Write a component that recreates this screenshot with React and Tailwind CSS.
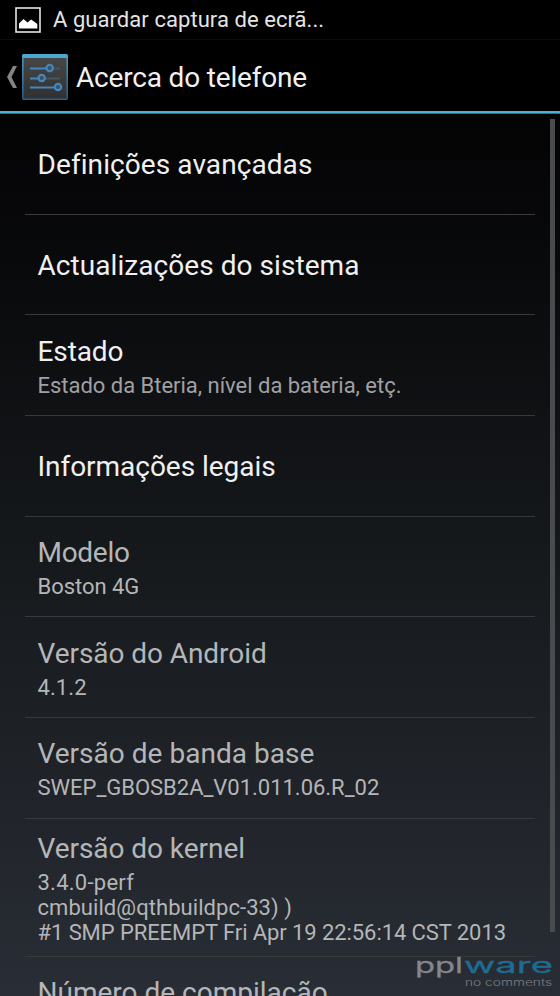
import React from "react";

const rows = [
  { title: "Definições avançadas", track: "tracking-[0.08px]" },
  { title: "Actualizações do sistema", track: "tracking-[0.06px]" },
  { title: "Estado", track: "tracking-[-0.1px]", lines: [{ text: "Estado da Bteria, nível da bateria, etç.", track: "tracking-[-0.02px]" }] },
  { title: "Informações legais", track: "tracking-[-0.04px]" },
  { title: "Modelo", track: "tracking-[-0.28px]", lines: [{ text: "Boston 4G", track: "tracking-[-0.04px]" }], muted: true },
  { title: "Versão do Android", track: "tracking-[-0.06px]", lines: [{ text: "4.1.2", track: "tracking-[0.1px]" }], muted: true },
  { title: "Versão de banda base", track: "tracking-[0.02px]", lines: [{ text: "SWEP_GBOSB2A_V01.011.06.R_02", track: "tracking-[-0.02px]" }], muted: true },
  {
    title: "Versão do kernel",
    track: "tracking-[-0.05px]",
    lines: [
      { text: "3.4.0-perf", track: "tracking-[0.25px]" },
      { text: "cmbuild@qthbuildpc-33) )", track: "tracking-[0.06px]" },
      { text: "#1 SMP PREEMPT Fri Apr 19 22:56:14 CST 2013", track: "tracking-[-0.08px]" },
    ],
    muted: true,
    tall: true,
  },
];

function PictureIcon() {
  return (
    <svg className="ml-[15px] h-[26px] w-[26px] shrink-0" viewBox="0 0 26 26">
      <rect x="1" y="1" width="24" height="24" fill="none" stroke="#e6e6e6" strokeWidth="1.6" />
      <path d="M4 21.5V16.5L8.5 12L12.5 15.5L16 12.5L19 14.5L22.3 17V21.5Z" fill="#fff" />
    </svg>
  );
}

function SettingsIcon() {
  return (
    <svg className="h-[46px] w-[46px] shrink-0" viewBox="0 0 46 46">
      <defs>
        <linearGradient id="face" x1="0" y1="0" x2="0" y2="1">
          <stop offset="0" stopColor="#484848" />
          <stop offset="1" stopColor="#303030" />
        </linearGradient>
        <linearGradient id="edge" x1="0" y1="0" x2="0" y2="1">
          <stop offset="0" stopColor="#4aa9d0" />
          <stop offset="1" stopColor="#285f91" />
        </linearGradient>
      </defs>
      <rect x="0.8" y="0.8" width="44.4" height="44.4" rx="1" fill="url(#face)" stroke="url(#edge)" strokeWidth="1.4" />
      <rect x="0.5" y="0.5" width="45" height="3.5" rx="1" fill="#4ba9cf" />
      <g stroke="#4485ba" strokeWidth="1.8" fill="none">
        <path d="M8 14.5H24M8 24.5H16M8 33.5H33" />
        <path d="M31 14.5H38M23 24.5H38" stroke="#41586a" />
        <circle cx="27.7" cy="14" r="3.2" fill="#3b5062" strokeWidth="2.2" />
        <circle cx="19.7" cy="24" r="3.2" fill="#3b5062" strokeWidth="2.2" />
        <circle cx="36" cy="33" r="3.2" fill="#3b5062" strokeWidth="2.2" />
      </g>
    </svg>
  );
}

function Row({ title, track, lines, muted, tall }) {
  return (
    <div className={`${tall ? "h-[138px]" : "h-[100.7px]"} ml-[25px] flex w-[510px] shrink-0 flex-col justify-center border-b border-[#37393d] pt-[2px] pl-[12.5px]`}>
      <div className={`text-[28px] leading-[33px] ${track} ${muted ? "text-[#b4b6b8]" : "text-[#f0f0f0]"}`}>{title}</div>
      {lines && (
        <div className={`mt-[5px] text-[22px] leading-[25px] ${muted ? "text-[#b4b6b8]" : "text-[#a0a1a3]"}`}>
          {lines.map((line) => (
            <div key={line.text} className={`whitespace-nowrap ${line.track}`}>{line.text}</div>
          ))}
        </div>
      )}
    </div>
  );
}

export default function App() {
  return (
    <div className="relative flex h-[996px] w-[560px] flex-col overflow-hidden bg-black font-[Roboto,sans-serif]">
      <div className="flex h-[39px] shrink-0 items-center">
        <PictureIcon />
        <span className="ml-[12px] text-[22px] tracking-[0.06px] text-[#e4e4e4]">A guardar captura de ecrã...</span>
      </div>
      <header className="flex h-[72px] shrink-0 items-center border-t border-[#0c0c0c]">
        <svg className="mt-[2px] ml-[6px] h-[24px] w-[12px] shrink-0" viewBox="0 0 12 24">
          <path d="M7 1H11L5.5 12L11 23H7L1 12Z" fill="#848484" />
        </svg>
        <div className="mt-[2px] ml-[4px]"><SettingsIcon /></div>
        <h1 className="mt-[4px] ml-[8px] text-[28px] tracking-[-0.18px] text-[#f0f0f0]">Acerca do telefone</h1>
      </header>
      <div className="h-[3px] shrink-0 border-b border-[#2a7690] bg-[#4bb0d2]" />
      <main className="flex min-h-0 flex-1 flex-col overflow-hidden bg-linear-to-b from-[#040405] via-[#16191c] to-[#292d35]">
        {rows.map((row) => <Row key={row.title} {...row} />)}
        <div className="ml-[37.5px] mt-[19px] shrink-0 text-[28px] leading-[33px] text-[#b4b6b8]">Número de compilação</div>
      </main>
      <div className="absolute left-[550px] top-[119px] h-[813px] w-[5px] bg-[#494b4e]" />
      <svg className="absolute left-[412px] top-[950px] h-[42px] w-[144px]" viewBox="0 0 144 42">
        <g fontFamily="Inter, sans-serif">
          <text x="3" y="23" fontSize="22" fontWeight="400" fill="#83868d" stroke="#83868d" strokeWidth="0.3" textLength="48" lengthAdjust="spacingAndGlyphs">ppl</text>
          <text x="52" y="23" fontSize="22" fontWeight="400" fill="#1f6b91" stroke="#1f6b91" strokeWidth="0.3" textLength="89" lengthAdjust="spacingAndGlyphs">ware</text>
          <text x="53" y="36" fontSize="10" fontWeight="300" fill="#7b7e84" textLength="87" lengthAdjust="spacingAndGlyphs">no comments</text>
        </g>
      </svg>
    </div>
  );
}
